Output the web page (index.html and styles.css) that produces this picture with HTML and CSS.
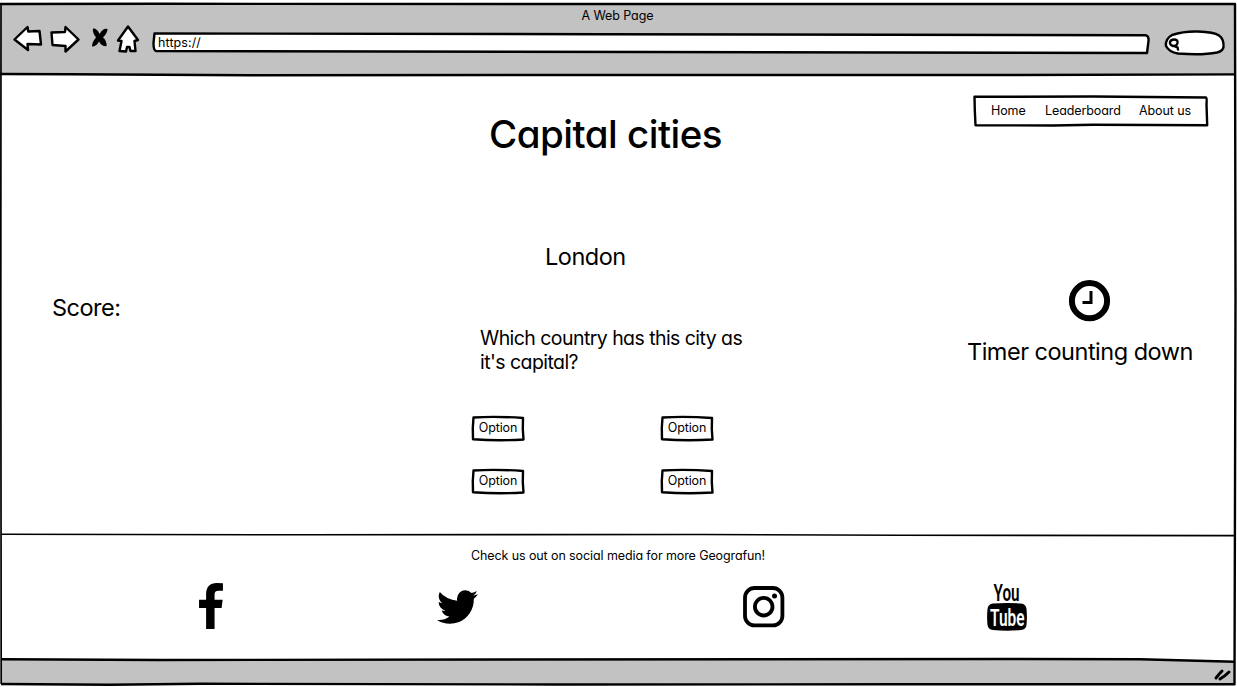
FILE: index.html
```
<!DOCTYPE html>
<html lang="en">
<head>
<meta charset="utf-8">
<title>A Web Page</title>
<link rel="stylesheet" href="styles.css">
</head>
<body>
<div class="window">
  <svg class="frame" viewBox="0 0 1237 687" aria-hidden="true">
    <path class="chrome-fill" d="M1 4H1235V74.500L800 75 300 74.500 1 74z"/>
    <path class="chrome-fill" d="M1 659.500L500 659.500 1100 659 1235 661.500V684.500H140L1 683.500z"/>
    <path class="line" d="M0 4L160 3.800 700 4 1235 4L1235.500 300 1234.500 684.300 900 684.300 560 684.500 200 683.800 110 684.800 1 684"/>
    <path class="line thin" d="M1 4L.8 300 1.200 684"/>
    <path class="line" d="M0 74L70 74.300 250 75.200 620 75 1000 75 1235 74.400"/>
    <path class="line" d="M1 659.200L160 660 500 659.500 1010 659 1140 659.300 1235 661.800"/>
    <path class="line rule" d="M1 534.300L300 534.800 700 534.500 900 535.300 1235 535.600"/>
  </svg>

  <header class="chrome">
    <div class="window-title">A Web Page</div>
    <div class="toolbar">
      <svg class="arrows" viewBox="0 0 130 32" aria-hidden="true">
        <path class="shape" d="M1.500 16.500L14.500 4 15.300 8.500 26.500 8 28 21.500 14.500 21 15 27z"/>
        <path class="shape" d="M38.500 9.500L52 9 52.500 4 65.500 16.500 52.500 28.500 52.500 23 39.500 22z"/>
        <path class="cross" d="M80 5.500Q84 5 86.500 11Q90 5 94.500 6Q94.500 10 90 14.500Q94 18 93.500 23Q89 24 86 18.500Q83.500 23.500 79 23.500Q79 19 83 14.500Q79 9 80 5.500z"/>
        <path class="shape" d="M115 3.500L125 17 121.500 18 122.500 28 117.500 28 116.500 24 114 24 113 28.500 106.500 28 108.500 18 105 17.500z"/>
      </svg>
      <div class="address">
        <svg class="sketch" viewBox="0 0 998 22" aria-hidden="true"><path class="shape" d="M2.500 1.500L450 2.200 994 3.300Q997 4 996.500 9L995 21 500 20 4 19Q1.500 18.500 1.500 11z"/></svg>
        <span>https://</span>
      </div>
      <svg class="search" viewBox="0 0 62 28" aria-hidden="true">
        <path class="shape" d="M8 6Q20 2 34 2.500Q50 3 55 6.500Q60 10 59.500 18Q59 22 53 23.500Q38 26.500 14 24.500Q5 23 2 17Q1 10 8 6z"/>
        <path class="lens" d="M10 10.500Q14 10.500 13.500 14Q12.500 17.500 9 17Q5.500 16 6 13Q7 10.500 10 10.500zM11 17.500L13.500 18.500 14 20.500"/>
      </svg>
    </div>
  </header>

  <main class="game">
    <aside class="score">Score:</aside>
    <section class="quiz">
      <h1>Capital cities</h1>
      <h2>London</h2>
      <p class="question">Which country has this city as<br><span>it's capital?</span></p>
      <div class="options">
        <button><svg class="sketch" viewBox="0 0 54 27"><path class="line" d="M2.500 2.500Q25 1 52 3L51.800 14 52.500 24.500Q28 26 2 24.300L1.800 13z"/></svg><span>Option</span></button>
        <button><svg class="sketch" viewBox="0 0 54 27"><path class="line" d="M2.500 2.500Q25 1 52 3L51.800 14 52.500 24.500Q28 26 2 24.300L1.800 13z"/></svg><span>Option</span></button>
        <button><svg class="sketch" viewBox="0 0 54 27"><path class="line" d="M2.500 2.500Q25 1 52 3L51.800 14 52.500 24.500Q28 26 2 24.300L1.800 13z"/></svg><span>Option</span></button>
        <button><svg class="sketch" viewBox="0 0 54 27"><path class="line" d="M2.500 2.500Q25 1 52 3L51.800 14 52.500 24.500Q28 26 2 24.300L1.800 13z"/></svg><span>Option</span></button>
      </div>
    </section>
    <aside class="side">
      <nav>
        <svg class="sketch" viewBox="0 0 236 32"><path class="line" d="M1.500 1.800L120 1.500 233 2.500Q234 3 233.500 9L234.200 30.300 120 29.800 80 30.500 2.500 30.300 1.800 15z"/></svg>
        <a class="home">Home</a><a class="board">Leaderboard</a><a class="about">About us</a>
      </nav>
      <svg class="clock" viewBox="0 0 42 42" aria-hidden="true"><circle cx="20.500" cy="20.700" r="17.600"/><path d="M22 11V22.500H13.500"/></svg>
      <div class="timer">Timer counting down</div>
    </aside>
  </main>

  <footer class="social">
    <p>Check us out on social media for more Geografun!</p>
    <div class="icons">
      <svg class="facebook" viewBox="479 0 864 1664"><path d="M1343 12v264h-157q-86 0-116 36t-30 108v189h293l-39 296h-254v759h-306v-759h-255v-296h255v-218q0-186 104-288.500t277-102.500q147 0 228 12z"/></svg>
      <svg class="twitter" viewBox="108 256 1576 1280"><path d="M1684 408q-67 98-162 167 1 14 1 42 0 130-38 259.500t-115.500 248.500-184.500 210.500-258 146-323 54.500q-271 0-496-145 35 4 78 4 225 0 401-138-105-2-188-64.500t-114-159.500q33 5 61 5 43 0 85-11-112-23-185.500-111.500t-73.500-205.500v-4q68 38 146 41-66-44-105-115t-39-154q0-88 44-163 121 149 294.500 238.500t371.500 99.500q-8-38-8-74 0-134 94.500-228.500t228.500-94.500q140 0 236 102 109-21 205-78-37 115-142 178 93-10 186-50z"/></svg>
      <svg class="instagram" viewBox="0 0 42 42"><rect x="2" y="2" width="37.400" height="37.400" rx="9.500"/><circle cx="20.700" cy="20.700" r="8.800"/><circle class="dot" cx="31.500" cy="10" r="2.500"/></svg>
      <svg class="youtube" viewBox="0 0 40 49"><path d="M6 20.500Q20 19.500 34 20.500Q39 21 39.500 26Q40.300 34 39.500 42Q39 46.500 34 47Q20 48.500 6 47Q1 46.500 .5 42Q-.3 34 .5 26Q1 21 6 20.500z"/><text x="6.500" y="17.800" textLength="26" lengthAdjust="spacingAndGlyphs">You</text><text class="tube" x="3" y="42.500" textLength="34.500" lengthAdjust="spacingAndGlyphs">Tube</text></svg>
    </div>
  </footer>

  <div class="status">
    <svg class="grip" viewBox="0 0 18 14" aria-hidden="true"><path d="M2 11Q5 7 8 4M6 12Q11 9 15 5"/></svg>
  </div>
</div>
</body>
</html>
```
FILE: styles.css
```
* { box-sizing: border-box; }
body, h1, h2, p { margin: 0; font-weight: 400; }
body {
  background: #fff;
  color: #000;
  font-family: Inter, "Noto Sans", sans-serif;
  font-feature-settings: "cv11" 1;
  font-size: 12.500px;
  letter-spacing: -.1px;
  line-height: 16px;
}
svg { display: block; overflow: visible; }
.window {
  position: relative;
  width: 1237px;
  height: 687px;
  overflow: hidden;
  display: flex;
  flex-direction: column;
}
.frame { position: absolute; inset: 0; width: 1237px; height: 687px; z-index: -1; }
.sketch { position: absolute; inset: 0; width: 100%; height: 100%; z-index: -1; }
.chrome-fill { fill: #c2c2c2; }
.line { fill: none; stroke: #000; stroke-width: 2.4; stroke-linejoin: round; }
.thin { stroke-width: 1.7; }
.rule { stroke-width: 1.6; }
.shape { fill: #fff; stroke: #000; stroke-width: 2.4; stroke-linejoin: round; }

.chrome { height: 75px; padding-top: 8px; }
.window-title { text-align: center; padding-right: 2px; }
.toolbar { display: flex; align-items: flex-start; padding-left: 13px; }
.arrows { width: 130px; height: 32px; margin-top: -1px; }
.cross { fill: #000; }
.address { position: relative; z-index: 0; width: 998px; height: 22px; margin: 8px 0 0 9px; padding: 3px 6px; letter-spacing: .1px; }
.search { width: 62px; height: 28px; margin: 5px 0 0 14px; }
.lens { fill: none; stroke: #000; stroke-width: 2.4; stroke-linecap: round; }

.game { height: 460px; display: grid; grid-template-columns: 471px 1fr 270px; }
.score { padding: 220px 0 0 52px; font-size: 23.500px; line-height: 26px; letter-spacing: -.5px; }
h1 { padding: 35px 0 0 18px; font-size: 38.500px; line-height: 48px; font-weight: 500; letter-spacing: -.5px; }
h2 { padding: 84px 0 0 74px; font-size: 23.500px; line-height: 30px; letter-spacing: -.5px; }
.question { padding: 54px 0 0 9px; font-size: 19.500px; line-height: 24px; letter-spacing: -.56px; white-space: nowrap; }
.options { display: grid; grid-template-columns: 54px 54px; column-gap: 135px; row-gap: 26px; padding-top: 41px; }
button {
  position: relative; z-index: 0; width: 54px; height: 27px; padding: 0 0 2px;
  border: 0; background: none; font: inherit; color: inherit; font-feature-settings: inherit; letter-spacing: inherit;
  display: flex; align-items: center; justify-content: center;
}
.side { padding-top: 20px; }
nav { position: relative; z-index: 0; display: flex; width: 236px; height: 32px; margin-left: 6px; padding: 8px 0 0 18px; }
.home { width: 54px; }
.board { width: 94px; }
.clock { width: 42px; height: 42px; margin: 153px 0 0 102px; fill: none; stroke: #000; stroke-width: 6; }
.clock path { stroke-width: 3; }
.timer { font-size: 23.500px; line-height: 30px; margin-top: 15px; letter-spacing: -.5px; white-space: nowrap; }

.social { height: 125px; padding-top: 13px; }
.social p { padding-left: 471px; }
.icons { display: flex; padding: 19px 0 0 199px; }
.facebook { width: 24px; height: 46px; }
.twitter { width: 41px; height: 34px; margin: 7px 0 0 214px; }
.instagram { width: 42px; height: 42px; margin: 3px 0 0 265px; fill: none; stroke: #000; stroke-width: 3.800; }
.dot { fill: #000; stroke: none; }
.youtube { width: 40px; height: 49px; margin-left: 202px; font: 600 24px Roboto, sans-serif; letter-spacing: 0; }
.tube { fill: #fff; }
.status { display: flex; justify-content: flex-end; padding: 7px 5px 0 0; }
.grip { width: 18px; height: 14px; fill: none; stroke: #000; stroke-width: 3; stroke-linecap: round; }
```
